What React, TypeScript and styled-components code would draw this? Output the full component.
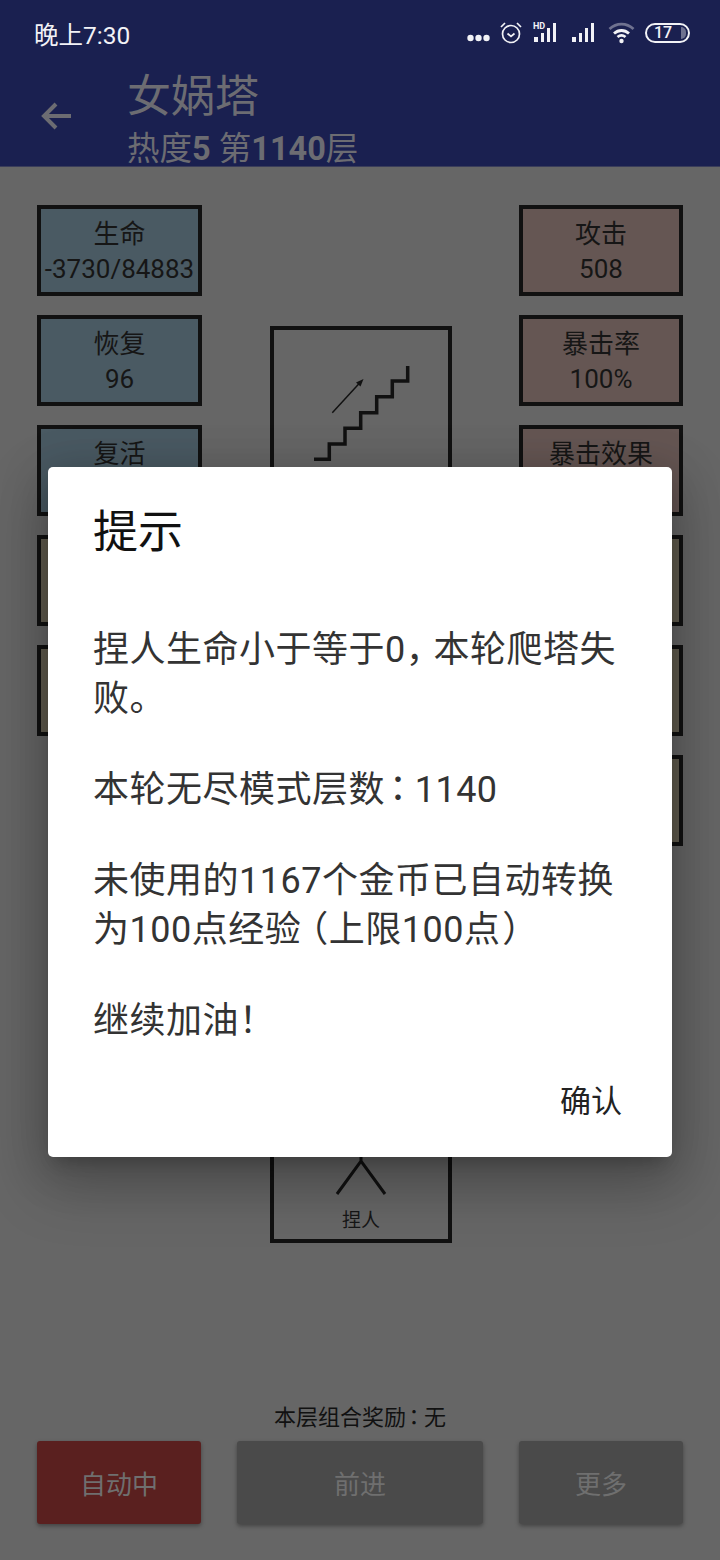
import React from 'react'
import styled, { createGlobalStyle } from 'styled-components'

const GlobalStyle = createGlobalStyle`
    html, body {
        margin: 0;
        padding: 0;
        background: #666;
    }
    body {
        font-family: Roboto, "Noto Sans CJK SC", sans-serif;
    }
`
const Screen = styled.div`
    position: relative;
    display: flex;
    flex-direction: column;
    width: 720px;
    height: 1560px;
    overflow: hidden;
    background: #666;
`
const Header = styled.header`
    height: 166px;
    background: #1a2050;
    border-bottom: 1px solid #3a3d5a;
    flex-shrink: 0;
`
const StatusBar = styled.div`
    display: flex;
    align-items: center;
    justify-content: space-between;
    height: 66px;
    padding: 0 30px 0 34px;
    color: #f2f2f6;
`
const Clock = styled.span`
    font-size: 24.5px;
`
const StatusIcons = styled.div`
    display: flex;
    align-items: center;
    gap: 10px;
`
const Battery = styled.div`
    position: relative;
    display: flex;
    align-items: center;
    justify-content: center;
    width: 45px;
    height: 20px;
    box-sizing: border-box;
    border: 2px solid #f2f2f6;
    border-radius: 10px;
    padding-right: 9px;
    font-size: 16px;
    font-weight: 500;
    line-height: 1;
`
const BatteryLevel = styled.span`
    position: absolute;
    right: 2px;
    top: 2px;
    width: 5px;
    height: 12px;
    border-radius: 0 6px 6px 0;
    background: #6f7290;
`
const AppBar = styled.div`
    display: flex;
    align-items: center;
    height: 100px;
    color: #6c6c72;
`
const BackButton = styled.div`
    display: flex;
    width: 127px;
    padding-left: 40px;
    box-sizing: border-box;
`
const AppTitle = styled.div`
    display: flex;
    flex-direction: column;
    align-self: flex-start;
    padding-top: 2px;
`
const TitleMain = styled.span`
    font-size: 44px;
    line-height: 58px;
`
const TitleSub = styled.span`
    font-size: 32.5px;
    line-height: 46px;
    b {
        font-weight: 700;
    }
`
const Board = styled.main`
    display: flex;
    padding: 38px 37px 0;
    flex: 1;
`
const StatColumn = styled.div<{ $width: number }>`
    display: flex;
    flex-direction: column;
    gap: 19px;
    width: ${p => p.$width}px;
`
const StatBox = styled.div<{ $bg: string }>`
    display: flex;
    flex-direction: column;
    align-items: center;
    box-sizing: border-box;
    height: 91px;
    padding-top: 8px;
    border: 4px solid #111;
    background: ${p => p.$bg};
    color: #161616;
    font-size: 26px;
    line-height: 35px;
    white-space: nowrap;
`
const MiddleColumn = styled.div`
    display: flex;
    flex-direction: column;
    justify-content: space-between;
    box-sizing: border-box;
    width: 182px;
    height: 917px;
    margin: 121px 67px 0 68px;
    border: 4px solid #111;
`
const Tile = styled.div`
    display: flex;
    flex-direction: column;
    align-items: center;
`
const StairIcon = styled.svg`
    margin-top: 26px;
`
const TileLabel = styled.span`
    font-size: 19px;
    line-height: 26px;
    color: #161616;
    margin-bottom: 5px;
`
const Footer = styled.footer`
    display: flex;
    flex-direction: column;
    padding: 0 37px 36px;
`
const BonusLine = styled.div`
    text-align: center;
    font-size: 22px;
    line-height: 28px;
    color: #111;
    margin-bottom: 9px;
`
const ButtonRow = styled.div`
    display: flex;
    justify-content: space-between;
`
const ActionButton = styled.div<{ $wide?: boolean; $bg: string }>`
    display: flex;
    align-items: center;
    justify-content: center;
    width: ${p => (p.$wide ? 246 : 164)}px;
    height: 83px;
    border-radius: 3px;
    background: ${p => p.$bg};
    box-shadow: 0 2px 4px rgba(0, 0, 0, .35);
    color: #6f6f6f;
    font-size: 26px;
`
const Dialog = styled.div`
    position: absolute;
    left: 48px;
    top: 467px;
    width: 624px;
    height: 690px;
    box-sizing: border-box;
    padding: 38px 46px 0 45px;
    background: #fff;
    border-radius: 5px;
    box-shadow: 0 24px 60px 6px rgba(0, 0, 0, .22), 0 9px 46px 8px rgba(0, 0, 0, .12), 0 11px 15px -7px rgba(0, 0, 0, .2);
`
const DialogTitle = styled.h2`
    margin: 0 0 65px;
    font-size: 45px;
    line-height: 56px;
    font-weight: 400;
    color: #111;
`
const DialogText = styled.p`
    margin: 0 0 42px;
    font-size: 36px;
    line-height: 49px;
    letter-spacing: .5px;
    color: #333;
`
const TextLine = styled.span`
    display: block;
    white-space: nowrap;
`
const ConfirmButton = styled.div`
    position: absolute;
    right: 50px;
    bottom: 34px;
    font-size: 31px;
    line-height: 42px;
    color: #222;
`
/* full-width punctuation in half-width cells, with the rest of the gap as margin */
const Colon = styled.span`
    font-family: "Noto Sans CJK TC", sans-serif;
    font-feature-settings: "halt";
    line-height: 0;
    margin: 0 .2em 0 .11em;
`
const Comma = styled.span`
    font-feature-settings: "halt";
    margin-right: .26em;
`
const OpenParen = styled.span`
    font-feature-settings: "halt";
    margin-left: .25em;
`
const CloseParen = styled.span`
    font-feature-settings: "halt";
    margin-left: .05em;
`

const SignalBars: React.FC<{ hd?: boolean }> = ({ hd }) => (
    <svg width="28" height="22" viewBox="0 0 28 22" fill="#f2f2f6">
        {hd && <text x="1" y="7" fontSize="9" fontWeight="700" fontFamily="Roboto, sans-serif">HD</text>}
        <rect x="2" y="15" width="4" height="5" />
        <rect x="9" y="11" width="3" height="9" />
        <rect x="15" y="6" width="3" height="14" />
        <rect x="21" y="1" width="3" height="19" />
    </svg>
)

const App: React.FC = () => {
    return (
        <Screen>
            <GlobalStyle />
            <Header>
                <StatusBar>
                    <Clock>晚上7:30</Clock>
                    <StatusIcons>
                        <svg width="23" height="22" viewBox="0 0 23 22" fill="#f2f2f6">
                            <circle cx="3.500" cy="16" r="3.200" />
                            <circle cx="11.500" cy="16" r="3.200" />
                            <circle cx="19.500" cy="16" r="3.200" />
                        </svg>
                        <svg width="22" height="22" viewBox="0 0 22 22" fill="none" stroke="#f2f2f6" strokeWidth="1.7">
                            <circle cx="11" cy="12" r="8.500" />
                            <path d="M7.500 11.500l3.500 3 3.500-3M1 5l4-4M21 5l-4-4" />
                        </svg>
                        <SignalBars hd />
                        <SignalBars />
                        <svg width="27" height="22" viewBox="0 0 27 22" fill="none" stroke="#f2f2f6" strokeWidth="2.800">
                            <path d="M1.500 7c7-6.500 17-6.500 24 0" stroke="#6f7290" />
                            <path d="M6 11.500c4.500-4 10.500-4 15 0" />
                            <path d="M9.500 15c2.500-2 5.500-2 8 0" />
                            <circle cx="13.500" cy="19" r="2.200" fill="#f2f2f6" stroke="none" />
                        </svg>
                        <Battery>17<BatteryLevel /></Battery>
                    </StatusIcons>
                </StatusBar>
                <AppBar>
                    <BackButton>
                        <svg width="32" height="28" viewBox="0 0 32 28" fill="none" stroke="#6c6c72" strokeWidth="4">
                            <path d="M31 14H4M16 2L4 14l12 12" />
                        </svg>
                    </BackButton>
                    <AppTitle>
                        <TitleMain>女娲塔</TitleMain>
                        <TitleSub>热度<b>5</b> 第<b>1140</b>层</TitleSub>
                    </AppTitle>
                </AppBar>
            </Header>
            <Board>
                <StatColumn $width={165}>
                    <StatBox $bg="#4a5a63"><span>生命</span><span>-3730/84883</span></StatBox>
                    <StatBox $bg="#4a5a63"><span>恢复</span><span>96</span></StatBox>
                    <StatBox $bg="#4a5a63"><span>复活</span></StatBox>
                    <StatBox $bg="#625d4f" />
                    <StatBox $bg="#625d4f" />
                </StatColumn>
                <MiddleColumn>
                    <Tile>
                        <StairIcon width="110" height="110" viewBox="0 0 110 110" fill="none" stroke="#111">
                            <path d="M8 103.300H23.300V88H39V72.300H54.700V56.700H70.700V40.700H86.300V25H101.700V10" strokeWidth="3.500" />
                            <path d="M26.300 56.700L55 25.500" strokeWidth="1.500" />
                            <path d="M57.500 23L50 26.500l4.500 4z" fill="#111" stroke="none" />
                        </StairIcon>
                    </Tile>
                    <Tile>
                        <svg width="60" height="60" viewBox="0 0 60 60" fill="none" stroke="#111" strokeWidth="3">
                            <path d="M6 46L30 13l24 33M30 0v13" />
                        </svg>
                        <TileLabel>捏人</TileLabel>
                    </Tile>
                </MiddleColumn>
                <StatColumn $width={164}>
                    <StatBox $bg="#655653"><span>攻击</span><span>508</span></StatBox>
                    <StatBox $bg="#655653"><span>暴击率</span><span>100%</span></StatBox>
                    <StatBox $bg="#655653"><span>暴击效果</span></StatBox>
                    <StatBox $bg="#625d4f" />
                    <StatBox $bg="#625d4f" />
                    <StatBox $bg="#625d4f" />
                </StatColumn>
            </Board>
            <Footer>
                <BonusLine>本层组合奖励<Colon>：</Colon>无</BonusLine>
                <ButtonRow>
                    <ActionButton $bg="#5a201f">自动中</ActionButton>
                    <ActionButton $bg="#4a4a4a" $wide>前进</ActionButton>
                    <ActionButton $bg="#4a4a4a">更多</ActionButton>
                </ButtonRow>
            </Footer>
            <Dialog>
                <DialogTitle>提示</DialogTitle>
                <DialogText>
                    <TextLine>捏人生命小于等于0<Comma>，</Comma>本轮爬塔失</TextLine>
                    <TextLine>败。</TextLine>
                </DialogText>
                <DialogText>
                    <TextLine>本轮无尽模式层数<Colon>：</Colon>1140</TextLine>
                </DialogText>
                <DialogText>
                    <TextLine>未使用的1167个金币已自动转换</TextLine>
                    <TextLine>为100点经验<OpenParen>（</OpenParen>上限100点<CloseParen>）</CloseParen></TextLine>
                </DialogText>
                <DialogText>
                    <TextLine>继续加油！</TextLine>
                </DialogText>
                <ConfirmButton>确认</ConfirmButton>
            </Dialog>
        </Screen>
    )
}
export default App
